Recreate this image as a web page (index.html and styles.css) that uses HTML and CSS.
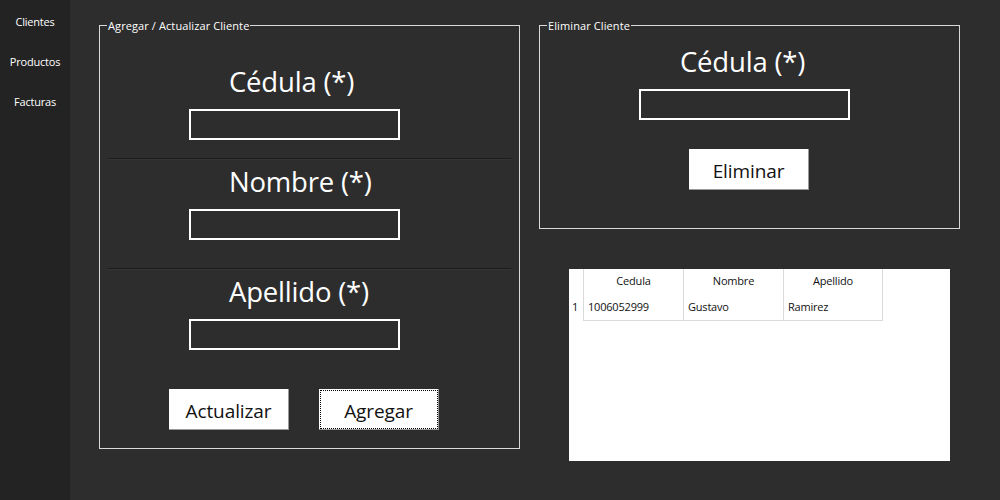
FILE: index.html
```html
<!DOCTYPE html>
<html lang="es">
<head>
<meta charset="utf-8">
<title>Clientes</title>
<link rel="stylesheet" href="styles.css">
</head>
<body>
<div class="app">
  <nav class="sidebar">
    <div class="nav-item">Clientes</div>
    <div class="nav-item">Productos</div>
    <div class="nav-item">Facturas</div>
  </nav>
  <main class="main">
    <fieldset class="group group-left">
      <legend>Agregar / Actualizar Cliente</legend>
      <div class="field field-1">
        <div class="label">Cédula (*)</div>
        <div class="input"></div>
      </div>
      <div class="sep sep-1"></div>
      <div class="field field-2">
        <div class="label">Nombre (*)</div>
        <div class="input"></div>
      </div>
      <div class="sep sep-2"></div>
      <div class="field field-3">
        <div class="label">Apellido (*)</div>
        <div class="input"></div>
      </div>
      <div class="buttons">
        <button class="btn">Actualizar</button>
        <button class="btn btn-focus">Agregar</button>
      </div>
    </fieldset>
    <div class="right-col">
      <fieldset class="group group-right">
        <legend>Eliminar Cliente</legend>
        <div class="field field-del">
          <div class="label">Cédula (*)</div>
          <div class="input"></div>
        </div>
        <button class="btn btn-del">Eliminar</button>
      </fieldset>
      <div class="grid-view">
        <div class="cell corner"></div>
        <div class="cell head">Cedula</div>
        <div class="cell head">Nombre</div>
        <div class="cell head">Apellido</div>
        <div class="cell rowhead">1</div>
        <div class="cell data">1006052999</div>
        <div class="cell data">Gustavo</div>
        <div class="cell data">Ramirez</div>
      </div>
    </div>
  </main>
</div>
</body>
</html>
```
FILE: styles.css
```css
html, body {
  margin: 0;
  padding: 0;
  background: #2d2d2d;
}
body {
  font-family: "Open Sans", "Noto Sans", sans-serif;
  color: #ffffff;
}
.app {
  display: flex;
  width: 1000px;
  height: 500px;
}
.sidebar {
  width: 70px;
  background: #232323;
  display: flex;
  flex-direction: column;
  padding-top: 12px;
  box-sizing: border-box;
}
.nav-item {
  height: 40px;
  line-height: 20px;
  font-size: 11px;
  text-align: center;
  letter-spacing: -0.2px;
}
.main {
  flex: 1;
  display: flex;
  gap: 19px;
  padding: 18px 0 0 29px;
}
.group {
  margin: 0;
  padding: 0;
  min-width: 0;
  border: 1px solid #d9d9d9;
  box-sizing: border-box;
}
.group legend {
  font-size: 11px;
  line-height: 14px;
  padding: 1px 1px 0 1px;
  margin-left: 7px;
  letter-spacing: 0.1px;
}
.group-left {
  width: 421px;
  height: 431px;
}
.field {
  display: flex;
  flex-direction: column;
  align-items: flex-start;
}
.label {
  font-size: 27.5px;
  line-height: 34px;
  height: 34px;
  letter-spacing: -0.2px;
  white-space: nowrap;
}
.input {
  width: 211px;
  height: 31px;
  box-sizing: border-box;
  border: 2px solid #ffffff;
  margin-top: 10px;
}
.group-left .field {
  padding-left: 89px;
}
.group-left .label {
  margin-left: 40px;
}
.field-1 { margin-top: 32px; }
.field-2, .field-3 { margin-top: 5px; }
.sep {
  margin: 0 8px;
  height: 0;
  border-top: 1px solid #1c1c1c;
  border-bottom: 1px solid #353535;
}
.sep-1 { margin-top: 18px; }
.sep-2 { margin-top: 28px; }
.buttons {
  display: flex;
  gap: 30px;
  padding-left: 69px;
  margin-top: 39px;
}
.btn {
  width: 120px;
  height: 41px;
  box-sizing: border-box;
  background: #ffffff;
  border: none;
  border-right: 1px solid #9a9a9a;
  border-bottom: 1px solid #9a9a9a;
  font-family: "Open Sans", "Noto Sans", sans-serif;
  font-size: 19px;
  color: #111111;
  padding: 3px 0 0 0;
  letter-spacing: -0.1px;
}
.btn-focus {
  outline: 1px dotted #000000;
  outline-offset: -2px;
}
.right-col {
  display: flex;
  flex-direction: column;
}
.group-right {
  width: 421px;
  height: 211px;
}
.field-del {
  padding-left: 99px;
  margin-top: 12px;
}
.field-del .label {
  margin-left: 41px;
}
.btn-del {
  margin: 29px 0 0 149px;
}
.grid-view {
  margin: 40px 0 0 30px;
  width: 381px;
  height: 192px;
  background: #ffffff;
  display: grid;
  grid-template-columns: 14px 100px 100px 100px;
  grid-template-rows: 24px 28px;
  align-content: start;
  color: #111111;
  font-size: 11px;
  letter-spacing: -0.2px;
}
.cell {
  box-sizing: border-box;
  white-space: nowrap;
}
.head {
  line-height: 24px;
  text-align: center;
}
.head, .data {
  border-left: 1px solid #dadada;
}
.cell:nth-child(4), .cell:nth-child(8) {
  border-right: 1px solid #dadada;
}
.data, .rowhead {
  line-height: 26px;
  padding-top: 1px;
}
.data {
  padding-left: 4px;
  border-bottom: 1px solid #dadada;
}
.rowhead {
  padding-left: 3px;
}
```
